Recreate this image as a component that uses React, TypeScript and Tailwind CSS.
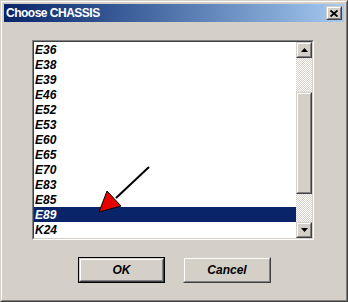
import React from 'react';

const items = ['E36', 'E38', 'E39', 'E46', 'E52', 'E53', 'E60', 'E65', 'E70', 'E83', 'E85', 'E89', 'K24'];
const selected = 'E89';

// classic raised bevel: outer dark bottom/right, inner white top/left
function Raised({ className, children }: { className?: string; children?: React.ReactNode }) {
  return (
    <div className={`border border-t-[#d4d0c8] border-l-[#d4d0c8] border-b-[#404040] border-r-[#404040] ${className ?? ''}`}>
      <div className="w-full h-full border border-t-white border-l-white border-b-[#808080] border-r-[#808080] bg-[#d4d0c8] flex items-center justify-center">
        {children}
      </div>
    </div>
  );
}

function Arrow({ up }: { up?: boolean }) {
  return (
    <svg width="7" height="4" viewBox="0 0 7 4">
      {up ? <polygon points="3.5,0 7,4 0,4" fill="#000" /> : <polygon points="0,0 7,0 3.5,4" fill="#000" />}
    </svg>
  );
}

export default function App() {
  return (
    <div className="relative w-[348px] h-[302px] overflow-hidden font-['Liberation_Sans',Arial,sans-serif]">
      {/* Window frame */}
      <div className="w-full h-full border border-t-[#d4d0c8] border-l-[#d4d0c8] border-b-[#404040] border-r-[#404040]">
        <div className="w-full h-full border border-t-white border-l-white border-b-[#808080] border-r-[#808080] bg-[#d4d0c8] p-[2px] flex flex-col">
          {/* Title bar */}
          <div className="h-[18px] shrink-0 flex items-center justify-between pl-[2px] pr-[2px] bg-gradient-to-r from-[#0a246a] to-[#a6caf0]">
            <span className="text-white font-bold text-[12px] leading-none tracking-[-0.5px]">Choose CHASSIS</span>
            <Raised className="w-[16px] h-[14px]">
              <svg width="8" height="7" viewBox="0 0 8 7">
                <path d="M0.5 0.5 L7.5 6.5 M7.5 0.5 L0.5 6.5" stroke="#000" strokeWidth="1.8" />
              </svg>
            </Raised>
          </div>

          {/* Body */}
          <div className="flex-1 pt-[18px] pl-[28px] flex flex-col">
            {/* List box */}
            <div className="w-[282px] h-[200px] border border-t-[#808080] border-l-[#808080] border-b-white border-r-white">
              <div className="w-full h-full border border-t-[#404040] border-l-[#404040] border-b-[#d4d0c8] border-r-[#d4d0c8] bg-white flex">
                <div className="flex-1 flex flex-col">
                  {items.map((it) => (
                    <div
                      key={it}
                      className={`h-[15px] pl-[1px] text-[12px] leading-[17px] font-bold italic ${
                        it === selected ? 'bg-[#0a246a] text-white' : 'text-black'
                      }`}
                    >
                      {it}
                    </div>
                  ))}
                </div>
                {/* Scrollbar */}
                <div className="w-[16px] flex flex-col">
                  <Raised className="w-[16px] h-[16px] shrink-0">
                    <Arrow up />
                  </Raised>
                  <div className="h-[34px] bg-[repeating-conic-gradient(#d4d0c8_0_25%,#ffffff_0_50%)] bg-[length:2px_2px]" />
                  <Raised className="w-[16px] h-[102px] shrink-0" />
                  <div className="h-[28px] bg-[repeating-conic-gradient(#d4d0c8_0_25%,#ffffff_0_50%)] bg-[length:2px_2px]" />
                  <Raised className="w-[16px] h-[16px] shrink-0">
                    <Arrow />
                  </Raised>
                </div>
              </div>
            </div>

            {/* Buttons */}
            <div className="mt-[17px] w-[282px] flex gap-[18px] pl-[46px]">
              <div className="w-[87px] h-[26px] border border-black">
                <Raised className="w-full h-full">
                  <span className="text-[12px] font-bold italic text-black">OK</span>
                </Raised>
              </div>
              <Raised className="w-[88px] h-[26px]">
                <span className="text-[12px] font-bold italic text-black">Cancel</span>
              </Raised>
            </div>
          </div>
        </div>
      </div>

      {/* Annotation arrow */}
      <svg className="absolute left-0 top-0 pointer-events-none" width="348" height="302">
        <line x1="149" y1="167" x2="116" y2="198" stroke="#000" strokeWidth="2" />
        <polygon points="99,212 107,191 121,206" fill="#e60000" stroke="#000" strokeWidth="1" strokeLinejoin="round" />
      </svg>
    </div>
  );
}
